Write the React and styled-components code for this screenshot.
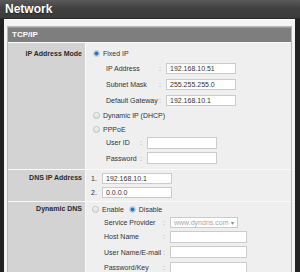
import React from 'react'
import styled, { createGlobalStyle } from 'styled-components'

const GlobalStyle = createGlobalStyle`
  html, body {
    margin: 0;
    padding: 0;
    background: #232323;
  }
  body {
    font-family: "Liberation Sans", Arial, sans-serif;
  }
`

const App = () => {
  return (
    <Frame>
      <GlobalStyle />
      <TitleBar>Network</TitleBar>
      <Body>
        <Panel>
          <SectionHead>TCP/IP</SectionHead>

          <Row>
            <Label $top={4} $lh={13}>IP Address Mode</Label>
            <Value $top={4} $bottom={3}>
              <Line $h={13}>
                <Radio $checked />
                <span>Fixed IP</span>
              </Line>
              <Line $h={16} $indent={13}>
                <SubLabel $w={53}>IP Address</SubLabel>
                <Colon>:</Colon>
                <TextBox $w={70}>192.168.10.51</TextBox>
              </Line>
              <Line $h={16} $indent={13}>
                <SubLabel $w={53}>Subnet Mask</SubLabel>
                <Colon>:</Colon>
                <TextBox $w={70}>255.255.255.0</TextBox>
              </Line>
              <Line $h={16} $indent={13}>
                <SubLabel $w={53}>Default Gateway</SubLabel>
                <Colon>:</Colon>
                <TextBox $w={70}>192.168.10.1</TextBox>
              </Line>
              <Line $h={15}>
                <Radio />
                <span>Dynamic IP (DHCP)</span>
              </Line>
              <Line $h={12}>
                <Radio />
                <span>PPPoE</span>
              </Line>
              <Line $h={15} $indent={13}>
                <SubLabel $w={34}>User ID</SubLabel>
                <Colon>:</Colon>
                <TextBox $w={70} $h={12} />
              </Line>
              <Line $h={16} $indent={13}>
                <SubLabel $w={34}>Password</SubLabel>
                <Colon>:</Colon>
                <TextBox $w={70} $h={12} />
              </Line>
            </Value>
          </Row>

          <Row>
            <Label $top={1} $lh={14}>DNS IP Address</Label>
            <Value $top={1} $bottom={2} $left={5}>
              <Line $h={14}>
                <Num>1.</Num>
                <TextBox $w={70}>192.168.10.1</TextBox>
              </Line>
              <Line $h={14}>
                <Num>2.</Num>
                <TextBox $w={70}>0.0.0.0</TextBox>
              </Line>
            </Value>
          </Row>

          <Row>
            <Label $top={1} $lh={12}>Dynamic DNS</Label>
            <Value $top={1} $bottom={0} $left={6}>
              <Line $h={12}>
                <Option>
                  <Radio />
                  <span>Enable</span>
                </Option>
                <Option>
                  <Radio $checked />
                  <span>Disable</span>
                </Option>
              </Line>
              <Line $h={14} $indent={12}>
                <SubLabel $w={59}>Service Provider</SubLabel>
                <Colon>:</Colon>
                <Select>
                  <span>www.dyndns.com</span>
                  <Arrow>▾</Arrow>
                </Select>
              </Line>
              <Line $h={15} $indent={12}>
                <SubLabel $w={59}>Host Name</SubLabel>
                <Colon>:</Colon>
                <TextBox $w={77} $h={12} />
              </Line>
              <Line $h={16} $indent={12}>
                <SubLabel $w={59}>User Name/E-mail</SubLabel>
                <Colon>:</Colon>
                <TextBox $w={77} $h={12} />
              </Line>
              <Line $h={15} $indent={12}>
                <SubLabel $w={59}>Password/Key</SubLabel>
                <Colon>:</Colon>
                <TextBox $w={77} $h={12} />
              </Line>
            </Value>
          </Row>
        </Panel>
      </Body>
    </Frame>
  )
}

const Frame = styled.div`
  width: 300px;
  height: 272px;
  overflow: hidden;
  background: #222;
  display: flex;
  flex-direction: column;
`

const TitleBar = styled.div`
  flex: none;
  height: 18px;
  padding-left: 5px;
  background: linear-gradient(#5a5a5a, #414141 45%, #3b3b3b);
  border-bottom: 1px solid #2a2a2a;
  color: #fff;
  font-size: 12px;
  font-weight: bold;
  line-height: 18px;
  text-shadow: 0 1px 1px rgba(0, 0, 0, 0.5);
`

const Body = styled.div`
  flex: 1;
  margin: 0 5px 0 4px;
  padding: 6px 3px 0;
  background: #f4f4f4;
  border-top: 1px solid #fff;
  display: flex;
  flex-direction: column;
  min-height: 0;
`

const Panel = styled.div`
  border: 1px solid #b8b8b8;
  border-bottom: none;
  background: #fff;
  display: flex;
  flex-direction: column;
`

const SectionHead = styled.div`
  height: 14px;
  padding-left: 4px;
  background: #7e7e7e;
  border-top: 1px solid #9a9a9a;
  color: #fff;
  font-size: 8px;
  font-weight: bold;
  line-height: 14px;
`

const Row = styled.div`
  display: grid;
  grid-template-columns: 77px 1fr;
  column-gap: 1px;
  background: #fafafa;
  border-top: 1px solid #fafafa;
  &:first-of-type {
    border-top: none;
  }
`

const Label = styled.div`
  background: #d3d3d3;
  padding: ${p => p.$top}px 3px 0 0;
  line-height: ${p => p.$lh}px;
  text-align: right;
  color: #2a2a2a;
  font-size: 7px;
  font-weight: bold;
  white-space: nowrap;
`

const Value = styled.div`
  background: #efefef;
  padding: ${p => p.$top}px 0 ${p => p.$bottom}px ${p => p.$left ?? 7}px;
  display: flex;
  flex-direction: column;
  color: #333;
  font-size: 7px;
`

const Line = styled.div`
  height: ${p => p.$h}px;
  padding-left: ${p => p.$indent || 0}px;
  display: flex;
  align-items: center;
  white-space: nowrap;
`

const Option = styled.span`
  display: inline-flex;
  align-items: center;
  margin-right: 5px;
`

const Radio = styled.span`
  flex: none;
  width: 5px;
  height: 5px;
  margin-right: 3px;
  border-radius: 50%;
  border: 1px solid ${p => (p.$checked ? '#b9cde0' : '#c2c2c2')};
  background: ${p =>
    p.$checked
      ? 'radial-gradient(circle, #2170c0 0, #2c78c4 45%, #cfdceb 70%)'
      : 'linear-gradient(#f4f4f4, #dcdcdc)'};
`

const SubLabel = styled.span`
  width: ${p => p.$w}px;
  flex: none;
  color: #333;
`

const Colon = styled.span`
  width: 7px;
  flex: none;
  color: #a0a0a0;
  text-align: left;
`

const Num = styled.span`
  width: 11px;
  flex: none;
  color: #333;
`

const TextBox = styled.span`
  box-sizing: border-box;
  width: ${p => p.$w}px;
  height: ${p => p.$h || 11}px;
  padding-left: 3px;
  background: #fff;
  border: 1px solid #cbcbcb;
  color: #333;
  font-size: 7px;
  line-height: ${p => (p.$h || 11) - 2}px;
`

const Select = styled.span`
  box-sizing: border-box;
  width: 68px;
  height: 11px;
  padding: 0 3px;
  background: #fff;
  border: 1px solid #cbcbcb;
  display: flex;
  align-items: center;
  justify-content: space-between;
  color: #a8a8a8;
  font-size: 7px;
`

const Arrow = styled.span`
  color: #888;
  font-size: 6px;
`

export default App
